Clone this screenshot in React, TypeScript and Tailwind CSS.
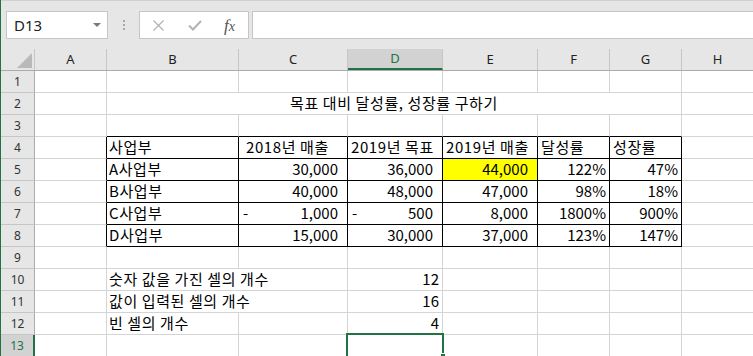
import React from 'react';

type Align = 'left' | 'right' | 'center';

interface CellDef {
  text?: string;
  dash?: boolean;
  align?: Align;
  pr?: number;
  pl?: number;
  bg?: string;
  rb?: string;
  bb?: string;
  span?: number;
  overflow?: boolean;
  noR?: boolean;
  label?: boolean;
}

const colW = [72, 132, 109, 95, 95, 72, 72, 72];
const letters = ['A', 'B', 'C', 'D', 'E', 'F', 'G', 'H'];
const GRID = '#d4d4d4';
const BLACK = '#000000';

const acct = (v: string, dash = false): CellDef => ({ text: v, align: 'right', pr: 9, dash });
const pct = (v: string): CellDef => ({ text: v, align: 'right', pr: 3 });
const lbl = (v: string, pl = 3): CellDef => ({ text: v, pl, label: true });

// rows 4..8 are the bordered table
const table: CellDef[][] = [
  [lbl('사업부', 2), lbl('2018년 매출', 7), lbl('2019년 목표'), lbl('2019년 매출'), lbl('달성률'), lbl('성장률')],
  [lbl('A사업부', 2), acct('30,000'), acct('36,000'), { ...acct('44,000'), bg: '#ffff00' }, pct('122%'), pct('47%')],
  [lbl('B사업부', 2), acct('40,000'), acct('48,000'), acct('47,000'), pct('98%'), pct('18%')],
  [lbl('C사업부', 2), acct('1,000', true), acct('500', true), acct('8,000'), pct('1800%'), pct('900%')],
  [lbl('D사업부', 2), acct('15,000'), acct('30,000'), acct('37,000'), pct('123%'), pct('147%')],
];

const buildRows = (): CellDef[][] => {
  const rows: CellDef[][] = [];
  const empty = (): CellDef[] => colW.map(() => ({}));
  rows.push(empty());
  // row 2: merged B2:G2 title
  rows.push([{}, { text: '목표 대비 달성률, 성장률 구하기', align: 'center', span: 6, label: true }, {}]);
  const r3 = empty();
  for (let i = 1; i <= 6; i++) r3[i].bb = BLACK;
  rows.push(r3);
  table.forEach((t) => {
    rows.push([{ rb: BLACK }, ...t.map((c) => ({ ...c, rb: BLACK, bb: BLACK })), {}]);
  });
  rows.push(empty());
  const summary: [string, string, boolean][] = [
    ['숫자 값을 가진 셀의 개수', '12', true],
    ['값이 입력된 셀의 개수', '16', true],
    ['빈 셀의 개수', '4', false],
  ];
  summary.forEach(([label, val, over]) => {
    const r = empty();
    r[1] = { ...lbl(label, 2), overflow: over, noR: over };
    r[3] = { text: val, align: 'right', pr: 3 };
    rows.push(r);
  });
  rows.push(empty());
  return rows;
};

const Cell = ({ c, w, selected }: { c: CellDef; w: number; selected?: boolean }) => {
  const justify = c.align === 'right' ? 'justify-end' : c.align === 'center' ? 'justify-center' : 'justify-start';
  return (
    <div
      className={`relative h-full shrink-0 flex items-end pb-[4px] border-b ${c.noR ? '' : 'border-r'} ${
        c.overflow || selected ? 'overflow-visible' : 'overflow-hidden'
      } ${justify}`}
      style={{
        width: w,
        borderRightColor: c.rb ?? GRID,
        borderBottomColor: c.bb ?? GRID,
        background: c.bg,
        paddingLeft: c.pl ?? 0,
        paddingRight: c.pr ?? 0,
      }}
    >
      {c.dash && <span className="absolute left-[4px] bottom-[4px] leading-none">-</span>}
      {c.text && (
        <span className={`whitespace-nowrap leading-none ${c.label ? 'tracking-[0.6px]' : ''}`}>{c.text}</span>
      )}
      {selected && (
        <div className="absolute -left-[2px] -top-[2px] w-[98px] h-[26px] border-2 border-[#217346] z-10">
          <div className="absolute -right-[4px] bottom-[-2px] w-[6px] h-[6px] bg-[#217346] border border-white" />
        </div>
      )}
    </div>
  );
};

const FormulaBar = () => (
  <div className="h-[49px] bg-[#e6e6e6] border-t border-[#d0d0d0] relative">
    <div className="flex items-start pt-[10px]">
      <div className="ml-[5px] w-[102px] h-[28px] bg-white border border-[#c6c6c6] flex items-center justify-between pl-[7px] pr-[6px]">
        <span className="text-[15px] text-[#222] leading-none" style={{ fontFamily: '"Noto Sans", sans-serif' }}>D13</span>
        <svg width="8" height="5" viewBox="0 0 8 5"><path d="M0 0 L8 0 L4 4 Z" fill="#7a7a7a" /></svg>
      </div>
      <div className="w-[31px] h-[28px] flex flex-col items-center justify-center gap-[2px]">
        <span className="w-[2px] h-[2px] bg-[#a8a8a8]" />
        <span className="w-[2px] h-[2px] bg-[#a8a8a8]" />
        <span className="w-[2px] h-[2px] bg-[#a8a8a8]" />
      </div>
      <div className="w-[110px] h-[28px] bg-white border border-[#c6c6c6] flex items-center">
        <svg className="ml-[13px]" width="11" height="11" viewBox="0 0 11 11">
          <path d="M0.5 0.5 L10.5 10.5 M10.5 0.5 L0.5 10.5" stroke="#b3b3b3" strokeWidth="1.3" />
        </svg>
        <svg className="ml-[24px]" width="14" height="11" viewBox="0 0 14 11">
          <path d="M1 5.5 L5 9.5 L13 1" stroke="#b3b3b3" strokeWidth="2" fill="none" />
        </svg>
        <span
          className="ml-[22px] text-[17px] italic text-[#555] leading-none"
          style={{ fontFamily: '"Liberation Serif", serif' }}
        >
          f<span className="text-[14px]">x</span>
        </span>
      </div>
      <div className="ml-[3px] flex-1 h-[28px] bg-white border border-[#c6c6c6] border-r-0" />
    </div>
  </div>
);

export default function App() {
  const rows = buildRows();
  return (
    <div
      className="w-[753px] h-[356px] overflow-hidden bg-white border-l border-[#217346] text-[15px] text-black"
      style={{ fontFamily: '"Noto Sans CJK KR", "Noto Sans", sans-serif' }}
    >
      <FormulaBar />
      {/* column headers */}
      <div className="flex h-[22px] bg-[#e6e6e6] border-b border-[#ababab]" style={{ fontFamily: '"Noto Sans", sans-serif' }}>
        <div className="relative w-[34px] shrink-0 border-r border-[#c6c6c6]">
          <svg className="absolute left-[16px] top-[4px]" width="15" height="15" viewBox="0 0 15 15">
            <path d="M15 0 L15 15 L0 15 Z" fill="#b9b9b9" />
          </svg>
        </div>
        {letters.map((l, i) => (
          <div
            key={l}
            className={`shrink-0 flex items-center justify-center text-[13px] border-r border-[#c6c6c6] ${
              l === 'D' ? 'bg-[#d2d2d2] text-[#217346] border-b-2 border-b-[#217346]' : 'text-[#222]'
            }`}
            style={{ width: colW[i] }}
          >
            {l}
          </div>
        ))}
      </div>
      {rows.map((r, ri) => {
        const n = ri + 1;
        const sel = n === 13;
        let ci = 0;
        return (
          <div key={n} className="flex h-[22px]">
            <div
              className={`w-[34px] shrink-0 flex items-center justify-center text-[12px] border-b border-b-[#c6c6c6] ${
                sel ? 'bg-[#d2d2d2] text-[#217346] border-r-2 border-r-[#217346]' : 'bg-[#e6e6e6] text-[#333] border-r border-r-[#ababab]'
              }`}
              style={{ fontFamily: '"Noto Sans", sans-serif' }}
            >
              {n}
            </div>
            {r.map((c, k) => {
              const span = c.span ?? 1;
              const w = colW.slice(ci, ci + span).reduce((a, b) => a + b, 0);
              const isD = ci === 3;
              ci += span;
              return <Cell key={k} c={c} w={w} selected={sel && isD} />;
            })}
          </div>
        );
      })}
    </div>
  );
}
